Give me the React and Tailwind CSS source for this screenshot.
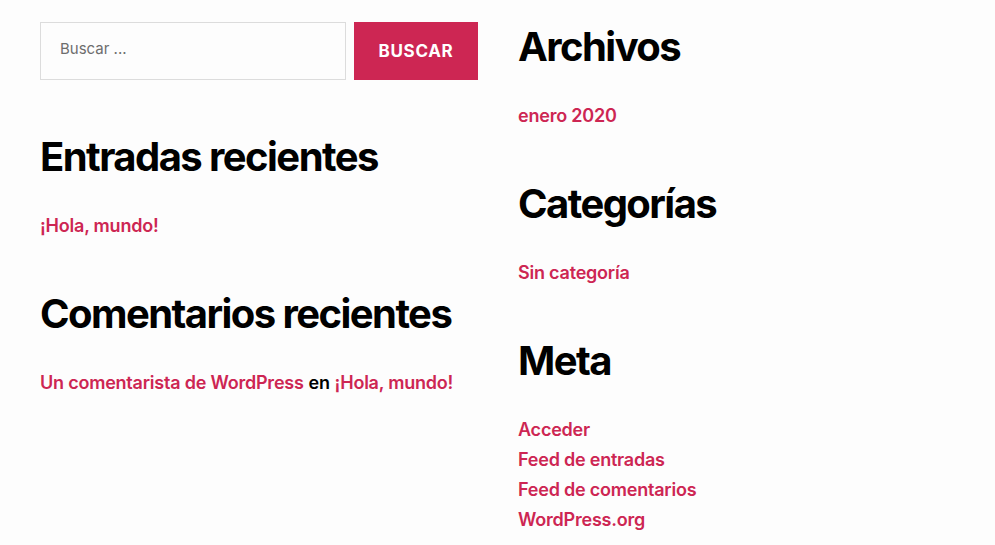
export default function App() {
  const font = { fontFamily: "Inter, 'Noto Sans', sans-serif" };
  const H = ({ children }) => (
    <h2 className="text-[40px] leading-[50px] font-bold tracking-[-0.039em] text-black">{children}</h2>
  );
  const A = ({ children }) => (
    <a className="text-[#cd2653] font-semibold" href="#">{children}</a>
  );
  const ul = "mt-[29px] text-[18px] leading-[30px] tracking-[-0.012em]";
  return (
    <div style={font} className="w-[995px] h-[545px] bg-[#fdfdfd] overflow-hidden">
      <div className="grid grid-cols-[438px_438px] gap-x-[40px] pl-[40px] pt-[22px]">
        <div className="flex flex-col">
          <form className="flex gap-[8px]" onSubmit={(e) => e.preventDefault()}>
            <input
              className="w-[306px] h-[58px] border border-[#dcdcdc] bg-[#fdfdfd] pl-[19px] pb-[6px] text-[15px] text-black placeholder:text-[#6d6d6d] outline-none"
              placeholder="Buscar ..."
            />
            <button className="w-[124px] h-[58px] pt-[2px] bg-[#cd2653] text-white text-[17px] font-bold uppercase tracking-[0.04em]">
              Buscar
            </button>
          </form>
          <div className="mt-[52px]">
            <H>Entradas recientes</H>
            <ul className={ul}>
              <li><A>¡Hola, mundo!</A></li>
            </ul>
          </div>
          <div className="mt-[48px]">
            <H>Comentarios recientes</H>
            <ul className={ul}>
              <li>
                <A>Un comentarista de WordPress</A>{" "}
                <span className="font-semibold text-black">en</span>{" "}
                <A>¡Hola, mundo!</A>
              </li>
            </ul>
          </div>
        </div>
        <div className="flex flex-col">
          <div>
            <H>Archivos</H>
            <ul className={ul}>
              <li><A>enero 2020</A></li>
            </ul>
          </div>
          <div className="mt-[48px]">
            <H>Categorías</H>
            <ul className={ul}>
              <li><A>Sin categoría</A></li>
            </ul>
          </div>
          <div className="mt-[48px]">
            <H>Meta</H>
            <ul className={ul}>
              <li><A>Acceder</A></li>
              <li><A>Feed de entradas</A></li>
              <li><A>Feed de comentarios</A></li>
              <li><A>WordPress.org</A></li>
            </ul>
          </div>
        </div>
      </div>
    </div>
  );
}
